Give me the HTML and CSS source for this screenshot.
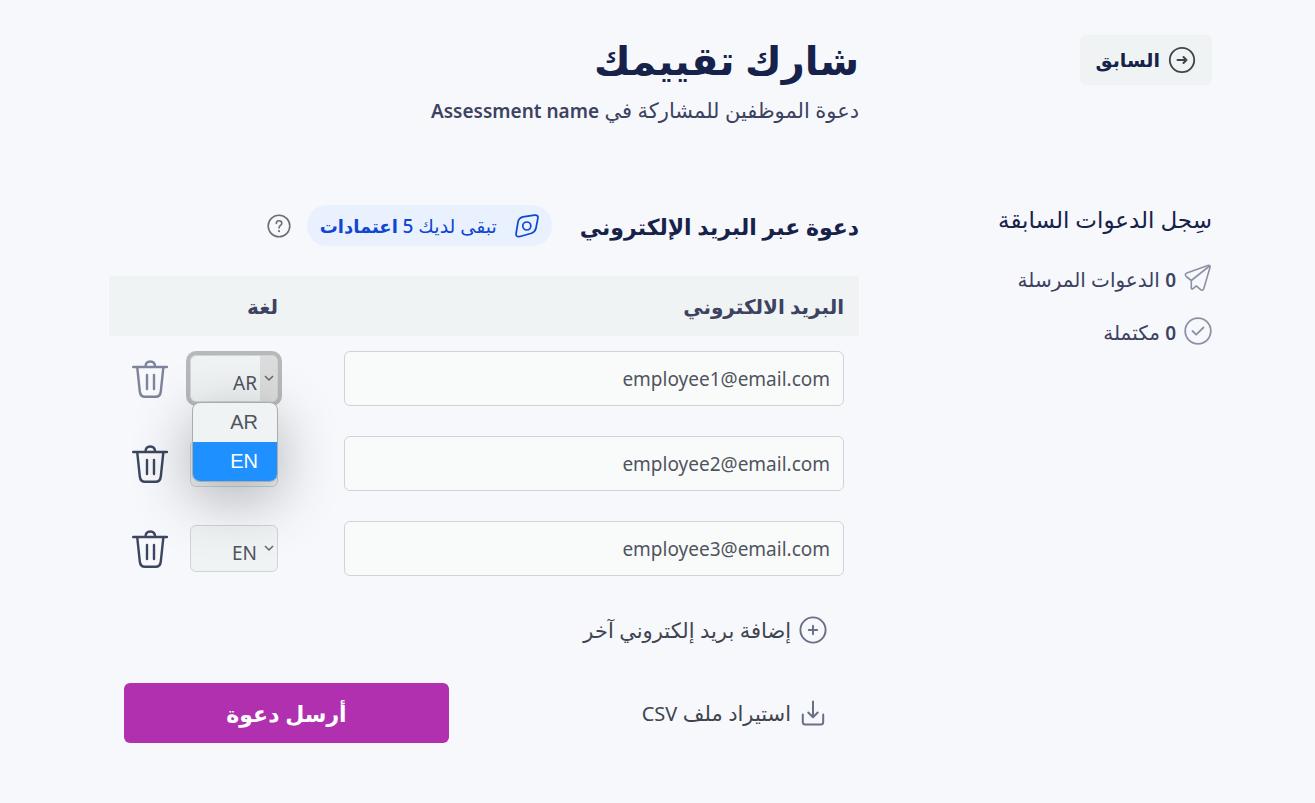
FILE: index.html
```html
<!DOCTYPE html>
<html lang="ar" dir="rtl">
<head>
  <meta charset="utf-8">
  <title>شارك تقييمك</title>
  <link rel="stylesheet" href="styles.css">
</head>
<body>
  <div class="page">
    <div class="back-col">
      <button type="button" class="back">
        <svg width="28" height="28" viewBox="0 0 28 28" fill="none" stroke="#40444a" stroke-width="1.8" stroke-linecap="round" stroke-linejoin="round"><circle cx="14" cy="14" r="12.2"/><path d="M9.5 14h9M15.500 11l3 3-3 3" stroke-width="2"/></svg>
        السابق
      </button>
    </div>

    <header class="heading">
      <h1>شارك تقييمك</h1>
      <p>دعوة الموظفين للمشاركة في <b dir="ltr">Assessment name</b></p>
    </header>

    <aside class="history">
      <h2>سِجل الدعوات السابقة</h2>
      <ul>
        <li>
          <svg width="28" height="30" viewBox="0 0 28 30" fill="none" stroke="#8c92a6" stroke-width="1.6" stroke-linecap="round" stroke-linejoin="round"><path d="M23.800 2.600Q26.600 1.800 26 4.600L19.800 25.500Q18.800 28.600 16.300 26.400L12.300 22.800 8.800 25.800Q7.300 26.600 7.300 25V17.500L2.200 13.500Q.200 11.300 2.800 9.900Z"/><path d="M7.300 17.500L25.500 3"/></svg>
          <span><b>0</b> الدعوات المرسلة</span>
        </li>
        <li>
          <svg width="28" height="28" viewBox="0 0 28 28" fill="none" stroke="#8c92a6" stroke-width="1.8" stroke-linecap="round" stroke-linejoin="round"><circle cx="14" cy="14" r="12.800"/><path d="M8.500 14l3.700 3.700L19.500 10.500"/></svg>
          <span><b>0</b> مكتملة</span>
        </li>
      </ul>
    </aside>

    <main>
      <div class="section-head">
        <h2>دعوة عبر البريد الإلكتروني</h2>
        <div class="credits">
          <svg width="24" height="24" viewBox="0 0 24 24" fill="none" stroke="#0f46d2" stroke-width="1.7" stroke-linejoin="round"><path d="M8 2.900L19.500 1.200Q23.500 .800 22.900 4.200L21 14Q20.300 17.600 16.500 19.300L5 22.500Q.500 23.300 1.100 19.500L3 8Q3.800 4 8 2.900Z"/><circle cx="11.800" cy="12" r="4"/></svg>
          <span>تبقى لديك <b><i>5</i> اعتمادات</b></span>
        </div>
        <button type="button" class="help" aria-label="مساعدة">
          <svg width="24" height="24" viewBox="0 0 24 24" fill="none" stroke="#6b7075" stroke-width="1.600" stroke-linecap="round"><circle cx="12" cy="12" r="10.800"/><path d="M9.300 9.500C9.300 5.800 14.800 6 14.800 9.300C14.800 11.500 12 11.500 12 14"/><path d="M12 17v.2" stroke-width="2"/></svg>
        </button>
      </div>

      <table>
        <thead>
          <tr>
            <th class="email">البريد الالكتروني</th>
            <th class="lang">لغة</th>
            <th class="remove"></th>
          </tr>
        </thead>
        <tbody>
          <tr>
            <td class="email"><input type="email" value="employee1@email.com" aria-label="البريد الالكتروني 1"></td>
            <td class="lang">
              <div class="select open">
                <select aria-label="لغة 1"><option>AR</option><option>EN</option></select>
                <svg class="chevron" width="10" height="7" viewBox="0 0 10 7" fill="none" stroke="#666" stroke-width="1.500"><path d="M1 1l4 4 4-4"/></svg>
                <ul class="menu">
                  <li>AR</li>
                  <li class="active">EN</li>
                </ul>
              </div>
            </td>
            <td class="remove">
              <button type="button" class="trash muted" aria-label="حذف"><svg width="36" height="38" viewBox="0 0 36 38"><use href="#trash"/></svg></button>
            </td>
          </tr>
          <tr>
            <td class="email"><input type="email" value="employee2@email.com" aria-label="البريد الالكتروني 2"></td>
            <td class="lang">
              <div class="select">
                <select aria-label="لغة 2"><option>AR</option><option selected>EN</option></select>
                <svg class="chevron" width="10" height="7" viewBox="0 0 10 7" fill="none" stroke="#666" stroke-width="1.500"><path d="M1 1l4 4 4-4"/></svg>
              </div>
            </td>
            <td class="remove">
              <button type="button" class="trash" aria-label="حذف"><svg width="36" height="38" viewBox="0 0 36 38"><use href="#trash"/></svg></button>
            </td>
          </tr>
          <tr>
            <td class="email"><input type="email" value="employee3@email.com" aria-label="البريد الالكتروني 3"></td>
            <td class="lang">
              <div class="select">
                <select aria-label="لغة 3"><option>AR</option><option selected>EN</option></select>
                <svg class="chevron" width="10" height="7" viewBox="0 0 10 7" fill="none" stroke="#666" stroke-width="1.500"><path d="M1 1l4 4 4-4"/></svg>
              </div>
            </td>
            <td class="remove">
              <button type="button" class="trash" aria-label="حذف"><svg width="36" height="38" viewBox="0 0 36 38"><use href="#trash"/></svg></button>
            </td>
          </tr>
        </tbody>
      </table>

      <button type="button" class="action add">
        <svg width="28" height="28" viewBox="0 0 28 28" fill="none" stroke="#686f87" stroke-width="1.900" stroke-linecap="round"><circle cx="14" cy="14" r="12.600"/><path d="M14 9.800v8.400M9.800 14h8.400"/></svg>
        إضافة بريد إلكتروني آخر
      </button>

      <div class="footer">
        <button type="button" class="action">
          <svg width="28" height="28" viewBox="0 0 28 28" fill="none" stroke="#686f87" stroke-width="2" stroke-linecap="round" stroke-linejoin="round"><path d="M14 2.500v15.500M9.300 13.500l4.700 4.700 4.700-4.700M3.800 15.500v7.500q0 2.500 2.500 2.500h15.400q2.500 0 2.500-2.500v-7.500"/></svg>
          <span>استيراد ملف <i>CSV</i></span>
        </button>
        <button type="submit" class="send">أرسل دعوة</button>
      </div>
    </main>
  </div>

  <svg class="defs" width="0" height="0">
    <symbol id="trash" viewBox="0 0 36 38">
      <path d="M1.200 7h33.800M5.200 7l2.600 24.500q.6 5.300 5.200 5.300h10.600q4.600 0 5.200-5.300l2.600-24.500M13.500 7q0-5.500 4.800-5.500t4.800 5.500M15 15v14M22 15v14" fill="none" stroke="currentColor" stroke-width="2.400" stroke-linecap="round" stroke-linejoin="round"/>
    </symbol>
  </svg>
</body>
</html>
```
FILE: styles.css
```css
* {
  box-sizing: border-box;
}

body {
  margin: 0;
  background-color: #f7f8fc;
  color: #3c4260;
  font-family: "Noto Sans", "DejaVu Sans", sans-serif;
  font-size: 20px;
}

h1, h2, p, ul {
  margin: 0;
  padding: 0;
}

ul {
  list-style: none;
}

i {
  font-style: normal;
}

button {
  border: none;
  background: none;
  padding: 0;
  color: inherit;
  font-family: inherit;
  font-size: 21px;
  cursor: pointer;
}

svg {
  display: block;
  flex-shrink: 0;
}

.defs {
  position: absolute;
}

.page {
  display: grid;
  grid-template-columns: 32% 1fr;
  row-gap: 70px;
  padding: 35px 103px 60px 109px;
}

.back {
  display: flex;
  align-items: center;
  gap: 8px;
  height: 50px;
  padding: 0 16px;
  border-radius: 6px;
  background-color: #eff3f4;
  color: #16224a;
  font-size: 19px;
  font-weight: 600;
}

.heading {
  height: 100px;
}

.heading h1 {
  color: #16224a;
  font-size: 40px;
  line-height: 50px;
}

.heading p {
  font-size: 21px;
  line-height: 50px;
}

.heading b {
  font-size: 19px;
  font-weight: 600;
}

.history h2 {
  margin-bottom: 18px;
  color: #16224a;
  font-size: 23px;
  font-weight: 400;
  line-height: 28px;
}

.history li {
  display: flex;
  align-items: center;
  gap: 8px;
  height: 53px;
}

.history span {
  padding-top: 4px;
}

.history b {
  font-size: 19px;
  font-weight: 600;
}

.section-head {
  display: flex;
  align-items: center;
  height: 41px;
  margin-bottom: 30px;
}

.section-head h2 {
  color: #16224a;
  font-size: 22px;
  white-space: nowrap;
}

.credits {
  display: flex;
  align-items: center;
  gap: 18px;
  height: 41px;
  margin: 0 28px 0 16px;
  padding: 0 13px;
  border-radius: 20px;
  background-color: #e9f1ff;
  color: #0f46d2;
  font-size: 19px;
  line-height: 36px;
  white-space: nowrap;
}

.credits b {
  font-size: 18px;
}

.credits i {
  font-size: 19px;
  font-weight: 500;
}

table {
  width: 100%;
  border-collapse: collapse;
  table-layout: fixed;
}

th {
  height: 60px;
  padding: 0 15px;
  background-color: #eff3f4;
  text-align: right;
}

td {
  padding: 15px;
}

th.lang, td.lang {
  width: 139px;
  padding: 0 51px 0 0;
}

th.remove, td.remove {
  width: 81px;
  padding: 0;
}

td input {
  display: block;
  width: 100%;
  height: 55px;
  padding: 0 13px;
  border: 1px solid #d0d2d8;
  border-radius: 6px;
  background-color: #f9fbfb;
  color: #50545e;
  font-family: inherit;
  font-size: 19px;
  direction: ltr;
  text-align: right;
}

.select {
  position: relative;
  height: 47px;
}

.select select {
  appearance: none;
  width: 100%;
  height: 100%;
  padding: 8px 20px 0 0;
  border: 1px solid #cfd4d8;
  border-radius: 6px;
  background-color: #eff3f4;
  color: #50545e;
  font-family: inherit;
  font-size: 19px;
}

.chevron {
  position: absolute;
  top: 20px;
  right: 4px;
}

.open select {
  background-image: linear-gradient(to left, #dcdcdc 17px, transparent 17px);
  box-shadow: 0 0 0 4px #b7b8ba;
}

.menu {
  position: absolute;
  z-index: 1;
  top: 47px;
  left: 2px;
  right: 0;
  overflow: hidden;
  border: 1px solid #a9abad;
  border-radius: 8px;
  background-color: #eff3f4;
  box-shadow: 0 16px 60px rgba(0, 0, 0, 0.3);
  color: #50545e;
  font-family: "Liberation Sans", sans-serif;
  font-size: 20px;
}

.menu li {
  padding-right: 19px;
  line-height: 39px;
}

.menu .active {
  background-color: #1e90ff;
  color: #fff;
}

.trash {
  display: block;
  margin: 0 auto;
  color: #3c4660;
}

.trash.muted {
  color: #7c839b;
}

.action {
  display: flex;
  align-items: center;
  gap: 8px;
  height: 28px;
  color: #40444f;
}

.action i {
  font-size: 20px;
}

.add {
  margin: 25px 32px 39px;
}

.footer {
  display: flex;
  align-items: center;
  justify-content: space-between;
  padding: 0 32px 0 15px;
}

.send {
  width: 325px;
  height: 60px;
  border-radius: 6px;
  background-color: #b030b0;
  color: #fff;
  font-size: 22px;
  font-weight: 700;
}
```
